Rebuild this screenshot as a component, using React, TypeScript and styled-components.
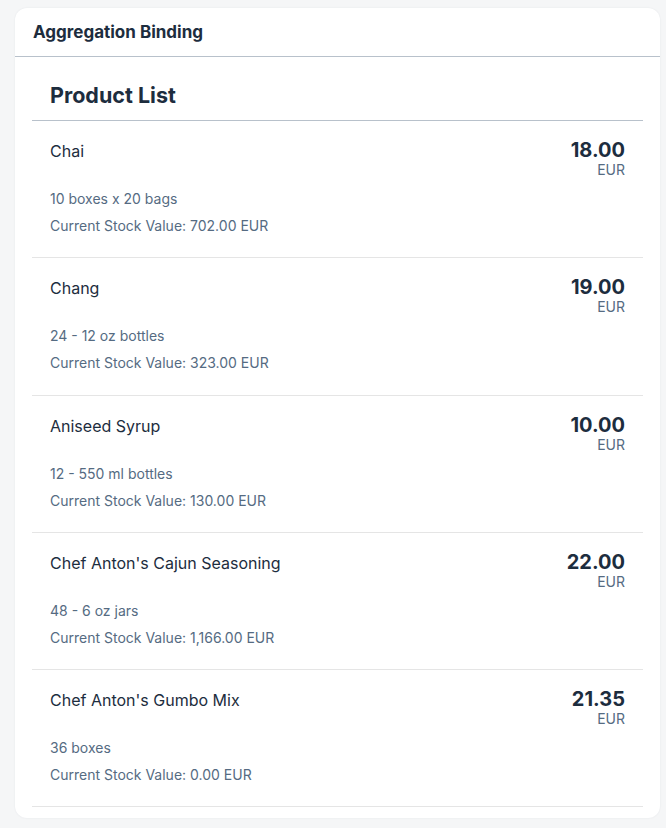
import React from 'react';
import styled, { createGlobalStyle } from 'styled-components';

const GlobalStyle = createGlobalStyle`
  html, body {
    margin: 0;
    padding: 0;
    background: #f5f6f7;
  }
  body {
    font-family: Inter, 'Liberation Sans', Arial, sans-serif;
    color: #1d2d3e;
  }
`;

const Page = styled.div`
  padding: 8px 6px 10px 15px;
`;

const Card = styled.section`
  background: #ffffff;
  border-radius: 12px;
  padding-bottom: 11px;
  box-shadow: 0 0 2px rgba(34, 53, 72, 0.08);
`;

const CardHeader = styled.header`
  height: 48px;
  display: flex;
  align-items: center;
  padding: 0 18px;
  border-bottom: 1px solid #b8c1cb;
  font-size: 17px;
  font-weight: 700;
`;

const ListWrap = styled.div`
  margin: 0 17px;
`;

const ListTitle = styled.h2`
  margin: 0;
  padding: 24px 18px 11px;
  font-size: 21.5px;
  line-height: 28px;
  font-weight: 700;
  border-bottom: 1px solid #b8c1cb;
`;

const Item = styled.div`
  display: flex;
  justify-content: space-between;
  align-items: flex-start;
  padding: 19px 18px 21.25px;
  border-bottom: 1px solid #e5e5e5;
`;

const Main = styled.div`
  display: flex;
  flex-direction: column;
`;

const Name = styled.div`
  font-size: 16px;
  line-height: 22px;
  margin-bottom: 27px;
`;

const Attr = styled.div<{ gap?: number }>`
  font-size: 14px;
  line-height: 20px;
  color: #556b82;
  margin-top: ${(p) => p.gap ?? 0}px;
`;

const Price = styled.div`
  display: flex;
  flex-direction: column;
  align-items: flex-end;
  margin-top: -1px;
`;

const Amount = styled.span`
  font-size: 20px;
  line-height: 22px;
  font-weight: 700;
`;

const Unit = styled.span`
  font-size: 14px;
  line-height: 18px;
  color: #556b82;
`;

const products = [
  { name: 'Chai', qty: '10 boxes x 20 bags', stock: '702.00', price: '18.00' },
  { name: 'Chang', qty: '24 - 12 oz bottles', stock: '323.00', price: '19.00' },
  { name: 'Aniseed Syrup', qty: '12 - 550 ml bottles', stock: '130.00', price: '10.00' },
  { name: "Chef Anton's Cajun Seasoning", qty: '48 - 6 oz jars', stock: '1,166.00', price: '22.00' },
  { name: "Chef Anton's Gumbo Mix", qty: '36 boxes', stock: '0.00', price: '21.35' },
];

const App = () => {
  return (
    <>
      <GlobalStyle />
      <Page>
        <Card>
          <CardHeader>Aggregation Binding</CardHeader>
          <ListWrap>
            <ListTitle>Product List</ListTitle>
            {products.map((p) => (
              <Item key={p.name}>
                <Main>
                  <Name>{p.name}</Name>
                  <Attr>{p.qty}</Attr>
                  <Attr gap={7}>Current Stock Value: {p.stock} EUR</Attr>
                </Main>
                <Price>
                  <Amount>{p.price}</Amount>
                  <Unit>EUR</Unit>
                </Price>
              </Item>
            ))}
          </ListWrap>
        </Card>
      </Page>
    </>
  );
};

export default App;
